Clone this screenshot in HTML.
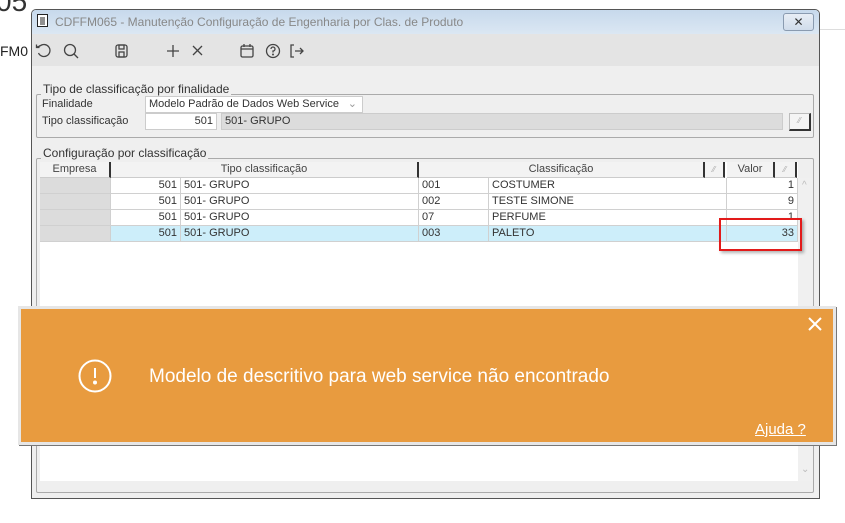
<!DOCTYPE html>
<html><head><meta charset="utf-8"><style>
*{margin:0;padding:0;box-sizing:border-box}
body{width:845px;height:523px;background:#fff;position:relative;overflow:hidden;font-family:"Liberation Sans",sans-serif;font-size:11px;color:#333}
.a{position:absolute}
.t{white-space:nowrap}
.cell{position:absolute;height:16px;line-height:15px;border-right:1px solid #d0d0d0;border-bottom:1px solid #d0d0d0;padding:0 3px;white-space:nowrap;font-size:11px;color:#333}
.hd{position:absolute;height:16px;line-height:15px;text-align:center;border-right:2px solid #333;background:#f3f3f3;color:#444;font-size:11px;border-bottom:1px solid #ccc}
</style></head><body>
<div class="a t" style="left:-4px;top:-14px;font-size:28px;color:#333">05</div>
<div class="a t" style="left:0;top:43px;font-size:14px;color:#222">FM0</div>
<div class="a" style="left:819px;top:29px;width:26px;height:1px;background:#ddd"></div>

<!-- window -->
<div class="a" style="left:31px;top:9px;width:789px;height:490px;background:#efefef;border:1px solid #555;border-radius:5px 5px 0 0;overflow:hidden">
  <div class="a" style="left:0;top:0;width:787px;height:24px;background:linear-gradient(#c7d9ec,#dbe7f3)"></div>
  <svg class="a" style="left:5px;top:4px" width="12" height="14"><rect x=".5" y=".5" width="10" height="12" fill="#fff" stroke="#222"/><path d="M3 4h5M3 6h5M3 8h5M3 10h5" stroke="#222"/></svg>
  <div class="a t" style="left:23px;top:5px;font-size:12px;color:#888">CDFFM065 - Manutenção Configuração de Engenharia por Clas. de Produto</div>
  <div class="a" style="left:751px;top:3px;width:31px;height:18px;border:1px solid #8a9bb0;border-radius:3px;background:linear-gradient(#e8eef5,#d0dceb);text-align:center;font-size:12px;line-height:16px;color:#333">✕</div>
  <div class="a" style="left:0;top:24px;width:787px;height:32px;background:#e4e4e4"></div>
  <svg class="a" style="left:0;top:30px" width="280" height="24" fill="none" stroke="#444" stroke-width="1.3">
    <path d="M8 6a6 6 0 1 1-1.5 7M8 6v-1M8 6l-3 1"/><path d="M4.5 4.5v3h3"/>
    <circle cx="38" cy="10" r="5.5"/><path d="M42 14l4 4"/>
    <rect x="84" y="5" width="11" height="12" rx="2"/><rect x="87" y="5" width="5" height="4"/><rect x="87" y="12" width="5" height="5"/>
    <path d="M141 5v12M135 11h12M161 6l9 9M170 6l-9 9"/>
    <rect x="209" y="6" width="12" height="11" rx="1.5"/><path d="M209 9h12M212 4v3M218 4v3"/>
    <circle cx="241" cy="11" r="6.5"/><path d="M239 9a2 2 0 1 1 2 2v1.5" /><circle cx="241" cy="14.5" r=".4" fill="#444"/>
    <path d="M262 5h-3v12h3M263 11h8M268 8l3 3-3 3"/>
  </svg>

  <!-- fieldset 1 -->
  <div class="a" style="left:4px;top:84px;width:778px;height:44px;border:1px solid #aaa;border-radius:2px"></div>
  <div class="a t" style="left:9px;top:72px;background:#efefef;padding:0 2px;font-size:12px;color:#333">Tipo de classificação por finalidade</div>
  <div class="a t" style="left:10px;top:88px">Finalidade</div>
  <div class="a t" style="left:113px;top:86px;width:218px;height:17px;background:#fff;border:1px solid #ccc;padding:1px 3px">Modelo Padrão de Dados Web Service<span style="position:absolute;right:5px;top:0;color:#999">⌄</span></div>
  <div class="a t" style="left:10px;top:105px">Tipo classificação</div>
  <div class="a t" style="left:113px;top:103px;width:72px;height:17px;background:#fff;border:1px solid #ccc;padding:1px 3px;text-align:right">501</div>
  <div class="a t" style="left:189px;top:103px;width:562px;height:17px;background:#dcdcdc;border:1px solid #ccc;padding:1px 3px">501- GRUPO</div>
  <div class="a" style="left:757px;top:103px;width:22px;height:18px;background:#f4f4f4;border:1px solid #bbb;border-right:2px solid #333;border-bottom:2px solid #333;font-size:8px;color:#aaa;text-align:center;line-height:14px">⁄⁄</div>

  <!-- fieldset 2 -->
  <div class="a" style="left:4px;top:148px;width:778px;height:335px;border:1px solid #aaa;border-radius:2px"></div>
  <div class="a t" style="left:9px;top:136px;background:#efefef;padding:0 2px;font-size:12px;color:#333">Configuração por classificação</div>
  <div class="a" style="left:8px;top:152px;width:758px;height:319px;background:#fff"></div>
  <div class="a" style="left:766px;top:168px;width:15px;height:303px;background:#f0f0f0"></div>
  <div class="a" style="left:770px;top:170px;color:#bbb;font-size:10px">^</div>
  <div class="a" style="left:769px;top:454px;color:#bbb;font-size:10px">⌄</div>
  <!-- header -->
  <div class="hd" style="left:8px;top:152px;width:71px">Empresa</div>
  <div class="hd" style="left:79px;top:152px;width:308px">Tipo classificação</div>
  <div class="hd" style="left:387px;top:152px;width:286px;border-right:2px solid #333">Classificação</div>
  <div class="hd" style="left:673px;top:152px;width:20px;font-size:8px;color:#aaa">⁄⁄</div>
  <div class="hd" style="left:695px;top:152px;width:48px">Valor</div>
  <div class="hd" style="left:743px;top:152px;width:22px;font-size:8px;color:#aaa">⁄⁄</div>
  <!-- rows -->
  <div id="rows"></div>
  <div class="cell" style="left:8px;top:168px;width:71px;background:#dcdcdc"></div><div class="cell" style="left:79px;top:168px;width:70px;text-align:right">501</div><div class="cell" style="left:149px;top:168px;width:238px">501- GRUPO</div><div class="cell" style="left:387px;top:168px;width:70px">001</div><div class="cell" style="left:457px;top:168px;width:238px">COSTUMER</div><div class="cell" style="left:695px;top:168px;width:71px;text-align:right">1</div>
  <div class="cell" style="left:8px;top:184px;width:71px;background:#dcdcdc"></div><div class="cell" style="left:79px;top:184px;width:70px;text-align:right">501</div><div class="cell" style="left:149px;top:184px;width:238px">501- GRUPO</div><div class="cell" style="left:387px;top:184px;width:70px">002</div><div class="cell" style="left:457px;top:184px;width:238px">TESTE SIMONE</div><div class="cell" style="left:695px;top:184px;width:71px;text-align:right">9</div>
  <div class="cell" style="left:8px;top:200px;width:71px;background:#dcdcdc"></div><div class="cell" style="left:79px;top:200px;width:70px;text-align:right">501</div><div class="cell" style="left:149px;top:200px;width:238px">501- GRUPO</div><div class="cell" style="left:387px;top:200px;width:70px">07</div><div class="cell" style="left:457px;top:200px;width:238px">PERFUME</div><div class="cell" style="left:695px;top:200px;width:71px;text-align:right">1</div>
  <div class="cell" style="left:8px;top:216px;width:71px;background:#dcdcdc"></div><div class="cell" style="left:79px;top:216px;width:70px;text-align:right;background:#cdeefa">501</div><div class="cell" style="left:149px;top:216px;width:238px;background:#cdeefa">501- GRUPO</div><div class="cell" style="left:387px;top:216px;width:70px;background:#cdeefa">003</div><div class="cell" style="left:457px;top:216px;width:238px;background:#cdeefa">PALETO</div><div class="cell" style="left:695px;top:216px;width:71px;text-align:right;background:#cdeefa">33</div>
  <div class="a" style="left:687px;top:208px;width:83px;height:33px;border:2px solid #e21a1a;box-shadow:2px 2px 3px rgba(0,0,0,.3)"></div>
</div>

<!-- toast -->
<div class="a" style="left:18px;top:306px;width:818px;height:139px;background:#e89b3f;border:3px solid #e6e6e6;box-shadow:1px 1px 0 #777"></div>
<svg class="a" style="left:78px;top:359px" width="34" height="34" fill="none" stroke="#fff" stroke-width="2"><circle cx="17" cy="17" r="15.5"/><path d="M17 9v10"/><circle cx="17" cy="23.5" r="1" fill="#fff"/></svg>
<div class="a t" style="left:149px;top:366px;font-size:19px;color:#fff">Modelo de descritivo para web service não encontrado</div>
<svg class="a" style="left:808px;top:317px" width="14" height="14" stroke="#fff" stroke-width="2"><path d="M1 1l12 12M13 1L1 13"/></svg>
<div class="a t" style="left:755px;top:421px;font-size:15px;color:#fff;text-decoration:underline">Ajuda ?</div>
</body></html>
